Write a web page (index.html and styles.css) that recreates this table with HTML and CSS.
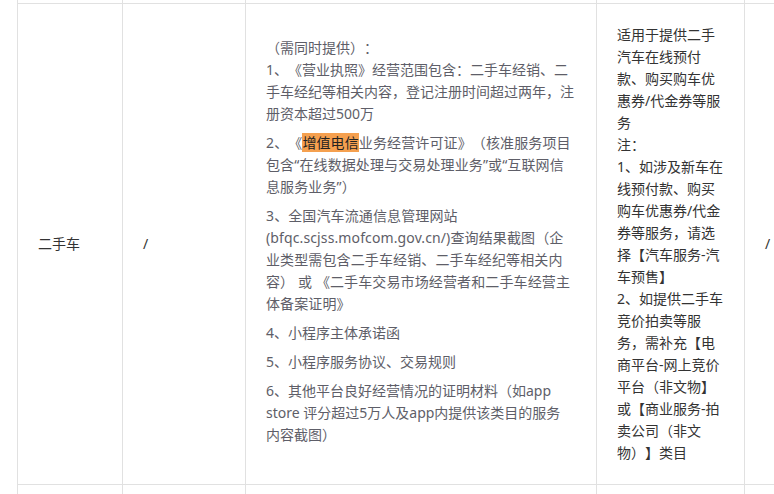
FILE: index.html
```html
<!DOCTYPE html>
<html>
<head>
    <title>类目资质</title>
    <link rel="stylesheet" href="styles.css">
</head>
<body>
    <div class="sheet">
        <table class="rules">
            <colgroup>
                <col class="c-cat">
                <col class="c-sub">
                <col class="c-docs">
                <col class="c-scope">
                <col class="c-extra">
            </colgroup>
            <tr class="edge">
                <td></td><td></td><td></td><td></td><td></td>
            </tr>
            <tr>
                <td class="cat">二手车</td>
                <td class="cat">/</td>
                <td class="docs">
                    <p>（需同时提供）：<br>1、《营业执照》经营范围包含：二手车经销、二手车经纪等相关内容，登记注册时间超过两年，注册资本超过500万</p>
                    <p class="spaced">2、《<mark>增值电信</mark>业务经营许可证》（核准服务项目包含“在线数据处理与交易处理业务”或“互联网信息服务业务”）</p>
                    <p class="spaced">3、全国汽车流通信息管理网站(bfqc.scjss.mofcom.gov.cn/)查询结果截图（企业类型需包含二手车经销、二手车经纪等相关内容） 或 《二手车交易市场经营者和二手车经营主体备案证明》</p>
                    <p>4、小程序主体承诺函</p>
                    <p>5、小程序服务协议、交易规则</p>
                    <p>6、其他平台良好经营情况的证明材料（如app store 评分超过5万人及app内提供该类目的服务内容截图）</p>
                </td>
                <td class="scope">适用于提供二手汽车在线预付款、购买购车优惠券/代金券等服务<br>注：<br>1、如涉及新车在线预付款、购买购车优惠券/代金券等服务，请选择【汽车服务-汽车预售】<br>2、如提供二手车竞价拍卖等服务，需补充【电商平台-网上竞价平台（非文物】或【商业服务-拍卖公司（非文物）】类目</td>
                <td class="cat">/</td>
            </tr>
            <tr class="next">
                <td></td><td></td><td></td><td></td><td></td>
            </tr>
        </table>
    </div>
</body>
</html>
```

FILE: styles.css
```css
/* Page */
body {
    margin: 0;
    background: #fff;
    font-family: "Noto Sans", "Noto Sans CJK SC", sans-serif;
    font-size: 14px;
    line-height: 22px;
    color: #333;
    text-spacing-trim: space-all; /* keep full-width punctuation */
}

.sheet {
    width: 774px;
    height: 494px;
    overflow: hidden;
    padding-left: 17px;
    box-sizing: border-box;
}

/* Table */
.rules {
    border-collapse: collapse;
    table-layout: fixed;
    width: 787px;
}

.c-cat { width: 105px; }
.c-sub { width: 123px; }
.c-docs { width: 351px; }
.c-scope { width: 148px; }
.c-extra { width: 60px; }

.rules td {
    border: 1px solid #e1e1e1;
    padding: 20px;
    vertical-align: middle;
}

.rules .edge td {
    height: 3px;
    padding: 0;
    border-top: none;
}

.rules .next td {
    height: 30px;
    padding: 0;
}

/* Cells */
.cat {
    color: #333;
}

.rules .docs {
    padding-right: 22px;
    padding-bottom: 25px;
    color: #5e5e68;
}

.docs p {
    margin: 0 0 7px;
}

.docs p:last-child {
    margin-bottom: 0;
}

.docs p.spaced {
    letter-spacing: 0.12px;
}

.docs mark {
    background-color: #f5a04f;
    color: #222;
}

.scope {
    color: #333;
}
```
